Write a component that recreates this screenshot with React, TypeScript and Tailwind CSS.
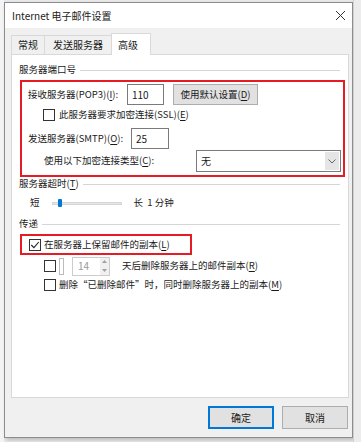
import React from "react";

const font = { fontFamily: '"Noto Sans CJK SC", "Microsoft YaHei", sans-serif' };

function Check({ checked }: { checked?: boolean }) {
  return (
    <span className="w-[12px] h-[12px] border border-[#333] bg-white flex items-center justify-center shrink-0">
      {checked && (
        <svg width="10" height="10" viewBox="0 0 10 10">
          <path d="M1.3 5 L3.9 7.6 L8.8 2" fill="none" stroke="#222" strokeWidth="1.1" />
        </svg>
      )}
    </span>
  );
}

function U({ c }: { c: string }) {
  return <span className="underline underline-offset-2">{c}</span>;
}

function GroupTitle({ children }: { children: React.ReactNode }) {
  return (
    <div className="flex items-center gap-[4px] h-[16px] pr-[8px]">
      <span className="whitespace-nowrap">{children}</span>
      <span className="flex-1 h-px bg-[#d5d5d5]" />
    </div>
  );
}

function Header() {
  return (
    <div className="h-[25px] bg-white flex items-center justify-between pl-[7px] pr-[6px]">
      <span className="text-[10px] text-[#222]">Internet 电子邮件设置</span>
      <svg width="11" height="11" viewBox="0 0 11 11">
        <path d="M1 1 L10 10 M10 1 L1 10" stroke="#333" strokeWidth="1" />
      </svg>
    </div>
  );
}

export default function App() {
  return (
    <div className="w-[361px] h-[442px] bg-[#e9e9e9] text-[9.5px] text-[#1a1a1a] leading-none overflow-hidden" style={font}>
      <div className="flex h-full">
        <div className="w-[4px] bg-[#f4f4f4]" />
        <div className="w-[349px] h-[436px] mt-[2px] border border-[#8c8c8c] bg-[#f0f0f0] flex flex-col shadow-[2px_2px_4px_rgba(0,0,0,0.2)]">
          <Header />
          {/* tabs */}
          <div className="flex items-end h-[26px] pl-[6px] text-[10px]">
            <div className="h-[19px] px-[6px] flex items-center border border-b-0 border-[#d9d9d9] bg-[#f0f0f0]">常规</div>
            <div className="h-[19px] px-[8px] flex items-center border border-b-0 border-l-0 border-[#d9d9d9] bg-[#f0f0f0]">发送服务器</div>
            <div className="h-[22px] px-[6px] w-[40px] -ml-px flex items-center border border-b-0 border-[#d9d9d9] bg-white relative top-px">高级</div>
          </div>
          {/* panel */}
          <div className="ml-[6px] w-[338px] h-[344px] border border-[#d9d9d9] bg-white pt-[7px] flex flex-col">
            <div className="pl-[7px]">
              <GroupTitle>服务器端口号</GroupTitle>
            </div>
            <div className="ml-[8px] mt-[2px] w-[325px] border-2 border-[#e51c23] pl-[6px] pr-[2px] pt-[2px] pb-[3px] flex flex-col">
              <div className="flex items-center h-[21px]">
                <span className="w-[99px] whitespace-nowrap">接收服务器(POP3)(<U c="I" />):</span>
                <span className="w-[37px] h-[21px] border border-[#7a7a7a] flex items-center pl-[4px] text-[10px]">110</span>
                <span className="ml-[9px] w-[85px] h-[21px] border border-[#adadad] bg-[#e1e1e1] flex items-center justify-center whitespace-nowrap">
                  使用默认设置(<U c="D" />)
                </span>
              </div>
              <div className="flex items-center h-[17px] mt-[1px] pl-[15px] gap-[4px]">
                <Check />
                <span className="whitespace-nowrap">此服务器要求加密连接(SSL)(<U c="E" />)</span>
              </div>
              <div className="flex items-center h-[21px] mt-[5px]">
                <span className="w-[103px] whitespace-nowrap">发送服务器(SMTP)(<U c="O" />):</span>
                <span className="w-[38px] h-[21px] border border-[#7a7a7a] flex items-center pl-[4px] text-[10px]">25</span>
              </div>
              <div className="flex items-center h-[22px] mt-[1px]">
                <span className="w-[168px] pl-[16px] whitespace-nowrap">使用以下加密连接类型(<U c="C" />):</span>
                <span className="w-[145px] h-[22px] border border-[#7a7a7a] flex items-center">
                  <span className="flex-1 pl-[4px] text-[10px]">无</span>
                  <span className="w-[14px] h-[18px] mr-[1px] bg-[#e5e5e5] flex items-center justify-center">
                    <svg width="8" height="5" viewBox="0 0 8 5">
                      <path d="M0.5 0.5 L4 4 L7.5 0.5" fill="none" stroke="#666" strokeWidth="1" />
                    </svg>
                  </span>
                </span>
              </div>
            </div>
            <div className="pl-[7px] -mt-px">
              <GroupTitle>服务器超时(<U c="T" />)</GroupTitle>
            </div>
            <div className="flex items-center h-[20px] mt-[1px] pl-[18px]">
              <span>短</span>
              <span className="ml-[12px] w-[70px] h-[12px] flex items-center relative">
                <span className="w-full h-[3px] bg-[#e6e6e6] border border-[#d6d6d6]" />
                <span className="absolute left-[6px] top-[2px] w-[4px] h-[8px] rounded-[1px] bg-[#0078d7]" />
              </span>
              <span className="ml-[12px] whitespace-nowrap">长&nbsp;&nbsp;1 分钟</span>
            </div>
            <div className="pl-[7px] mt-[3px]">
              <GroupTitle>传递</GroupTitle>
            </div>
            <div className="ml-[8px] mt-[2px] w-[172px] h-[21px] border-2 border-[#e51c23] flex items-center pl-[7px] gap-[3px]">
              <Check checked />
              <span className="whitespace-nowrap">在服务器上保留邮件的副本(<U c="L" />)</span>
            </div>
            <div className="flex items-center h-[20px] mt-[1px] pl-[32px]">
              <Check />
              <span className="ml-[3px] w-[5px] h-[17px] border border-[#bbb]" />
              <span className="ml-[8px] w-[38px] h-[19px] border border-[#cccccc] flex items-center">
                <span className="flex-1 pl-[5px] text-[#9a9a9a] text-[10px]">14</span>
                <span className="w-[9px] h-[17px] flex flex-col items-center justify-around bg-[#f0f0f0]">
                  <svg width="5" height="3" viewBox="0 0 5 3"><path d="M0 3 L2.5 0 L5 3Z" fill="#a0a0a0" /></svg>
                  <svg width="5" height="3" viewBox="0 0 5 3"><path d="M0 0 L2.5 3 L5 0Z" fill="#a0a0a0" /></svg>
                </span>
              </span>
              <span className="ml-[12px] whitespace-nowrap">天后删除服务器上的邮件副本(<U c="R" />)</span>
            </div>
            <div className="flex items-center h-[17px] pl-[32px] gap-[3px]">
              <Check />
              <span className="whitespace-nowrap">删除“已删除邮件”时，同时删除服务器上的副本(<U c="M" />)</span>
            </div>
          </div>
          {/* buttons */}
          <div className="flex justify-end gap-[8px] pr-[4px] mt-[8px] text-[10px]">
            <span className="w-[66px] h-[23px] border-2 border-[#0078d7] bg-[#e1e1e1] flex items-center justify-center">确定</span>
            <span className="w-[66px] h-[23px] border border-[#adadad] bg-[#e1e1e1] flex items-center justify-center">取消</span>
          </div>
        </div>
        <div className="flex-1 bg-[#ececec] border-l border-[#d0d0d0]" />
      </div>
    </div>
  );
}
